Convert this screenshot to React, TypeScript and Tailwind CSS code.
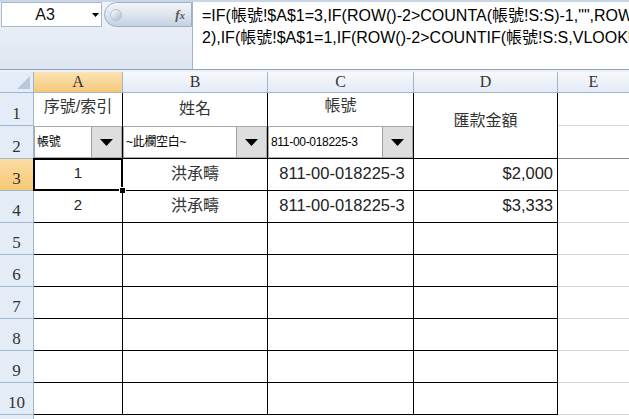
import React from "react";

const CJK = "font-['Liberation_Sans','Noto_Sans_CJK_TC',sans-serif]";
const SERIF = "font-['Liberation_Serif','Noto_Sans_CJK_TC',serif]";

function Tri({ w = 13, h = 7 }: { w?: number; h?: number }) {
  return (
    <svg width={w} height={h} viewBox={`0 0 ${w} ${h}`}>
      <polygon points={`0,0 ${w},0 ${w / 2},${h}`} fill="#000" />
    </svg>
  );
}

function Dropdown({ text }: { text: string }) {
  return (
    <div className="flex h-full border border-[#a8a8a8] bg-white">
      <div className={`flex-1 flex items-center pl-[2px] text-[12px] text-black whitespace-nowrap overflow-hidden ${CJK} tracking-[-0.3px]`}>
        {text}
      </div>
      <div className="w-[30px] bg-[#dedede] border-l border-[#a0a0a0] flex items-center justify-center">
        <Tri />
      </div>
    </div>
  );
}

const rowH = [33, 33, 32, 32, 32, 32, 32, 32, 32, 32];

export default function App() {
  const rh = (n: number, orange = false) => (
    <div
      key={`rh${n}`}
      className={`border-r border-b border-[#9eb6ce] flex items-end justify-center pb-[1px] text-[17px] leading-[20px] text-[#333] ${SERIF} ${
        orange ? "bg-gradient-to-b from-[#fbdca4] to-[#f7c872]" : "bg-[#e4ecf7]"
      }`}
    >
      {n}
    </div>
  );
  const E = (k: string, dark = false) => (
    <div key={k} className={`border-b ${dark ? "border-[#8c8c8c]" : "border-[#d0d7e5]"}`} />
  );
  const cell = "border-r border-b border-black flex items-center";

  const rows: React.ReactNode[] = [];
  // row 1
  rows.push(rh(1));
  rows.push(
    <div key="a1" className={`border-r border-black flex items-center justify-center pb-[6px] text-[16px] text-[#333] ${CJK}`}>序號/索引</div>
  );
  rows.push(
    <div key="b1" className={`border-r border-black flex items-center justify-center pb-[2px] text-[16px] text-[#333] ${CJK}`}>姓名</div>
  );
  rows.push(
    <div key="c1" className={`border-r border-black flex items-start justify-center pt-[1px] text-[16px] text-[#333] ${CJK}`}>帳號</div>
  );
  rows.push(
    <div key="d1" className={`row-span-2 border-r border-b border-black flex items-center justify-center pb-[10px] text-[16px] text-[#333] ${CJK}`}>匯款金額</div>
  );
  rows.push(E("e1"));
  // row 2
  rows.push(rh(2));
  rows.push(<div key="a2" className="border-r border-b border-black"><Dropdown text="帳號" /></div>);
  rows.push(<div key="b2" className="border-r border-b border-black"><Dropdown text="~此欄空白~" /></div>);
  rows.push(<div key="c2" className="border-r border-b border-black"><Dropdown text="811-00-018225-3" /></div>);
  rows.push(E("e2", true));
  // rows 3,4
  const data = [
    { n: 3, idx: "1", amt: "$2,000" },
    { n: 4, idx: "2", amt: "$3,333" },
  ];
  data.forEach((d) => {
    rows.push(rh(d.n, d.n === 3));
    rows.push(
      <div key={`a${d.n}`} className={`${cell} justify-center relative text-[15px] text-[#222] ${CJK}`}>
        <span className="-mt-[2px]">{d.idx}</span>
        {d.n === 3 && (
          <>
            <div className="absolute left-[-1px] top-[-1px] right-[-1px] bottom-[-1px] border-2 border-black" />
            <div className="absolute right-[-4px] bottom-[-4px] w-[7px] h-[7px] bg-black border border-white" />
          </>
        )}
      </div>
    );
    rows.push(
      <div key={`b${d.n}`} className={`${cell} justify-center text-[16px] text-[#333] ${CJK}`}>
        <span className="-mt-[2px]">洪承疇</span>
      </div>
    );
    rows.push(
      <div key={`c${d.n}`} className={`${cell} justify-center text-[16.5px] text-[#222] ${CJK}`}>
        <span className="-mt-[2px] pl-[3px]">811-00-018225-3</span>
      </div>
    );
    rows.push(
      <div key={`d${d.n}`} className={`${cell} justify-end pr-[4px] text-[16.5px] text-[#222] ${CJK}`}>
        <span className="-mt-[2px]">{d.amt}</span>
      </div>
    );
    rows.push(E(`e${d.n}`));
  });
  for (let n = 5; n <= 10; n++) {
    rows.push(rh(n));
    rows.push(<div key={`a${n}`} className={cell} />);
    rows.push(<div key={`b${n}`} className={cell} />);
    rows.push(<div key={`c${n}`} className={cell} />);
    rows.push(<div key={`d${n}`} className={cell} />);
    rows.push(E(`e${n}`));
  }
  // row 11 partial
  rows.push(<div key="rh11" className="bg-[#e4ecf7] border-r border-[#9eb6ce]" />);
  rows.push(<div key="a11" className="col-span-5" />);

  const colHdr = (l: string, orange = false, last = false) => (
    <div
      key={`h${l}`}
      className={`${last ? "" : "border-r"} border-b border-[#9eb6ce] flex items-center justify-center text-[16px] text-[#333] ${SERIF} ${
        orange ? "bg-gradient-to-b from-[#fbe3b4] to-[#f5c877]" : "bg-gradient-to-b from-[#f7f9fc] to-[#e3eaf4]"
      }`}
    >
      {l}
    </div>
  );

  return (
    <div className="w-[629px] h-[419px] overflow-hidden bg-white font-['Liberation_Sans',sans-serif]">
      {/* formula bar */}
      <div className="h-[70px] flex bg-gradient-to-b from-[#c9d6e6] to-[#c9d6e6] pt-[2px] border-b border-[#8fa4bf]">
        <div className="w-[192px] flex flex-col bg-gradient-to-b from-[#f1f4f9] to-[#dde5f0]">
          <div className="h-[25px] flex items-stretch">
            <div className="w-[101px] ml-[1px] bg-white border border-[#a9b9cc] relative flex items-center">
              <span className="w-[86px] text-center text-[16px] text-[#111]">A3</span>
              <div className="absolute left-[90px] top-[10px]">
                <Tri w={7} h={4} />
              </div>
            </div>
            <div className="flex-1 ml-[2px] rounded-l-full bg-gradient-to-b from-[#f3f6fa] via-[#dde5ef] to-[#c4d1e2] border border-[#9db0c6] flex items-center relative">
              <div className="w-[12px] h-[12px] ml-[5px] rounded-full bg-gradient-to-br from-white to-[#aebccd] border border-[#b4c2d3]" />
              <span className="ml-auto mr-[6px] text-[13px] italic font-bold text-[#555] font-['Liberation_Serif',serif]">
                f<span className="text-[11px]">x</span>
              </span>
            </div>
          </div>
        </div>
        <div className={`flex-1 bg-white border-l border-[#a3b2c5] pl-[9px] pt-[3px] text-[16px] leading-[22px] text-black whitespace-nowrap overflow-hidden ${CJK}`}>
          <div>=IF(帳號!$A$1=3,IF(ROW()-2&gt;COUNTA(帳號!S:S)-1,"",ROW()-</div>
          <div>2),IF(帳號!$A$1=1,IF(ROW()-2&gt;COUNTIF(帳號!S:S,VLOOKUP(</div>
        </div>
      </div>
      <div className="h-[2px] bg-[#eef2f8]" />
      {/* grid */}
      <div className="grid grid-cols-[34px_89px_145px_146px_144px_1fr] grid-rows-[21px_33px_33px_32px_32px_32px_32px_32px_32px_32px_32px_10px]">
        <div className="bg-[#e4ecf7] border-r border-b border-[#9eb6ce] relative">
          <svg className="absolute right-[3px] bottom-[3px]" width="13" height="13" viewBox="0 0 13 13">
            <polygon points="13,0 13,13 0,13" fill="#b7c8dc" />
          </svg>
        </div>
        {colHdr("A", true)}
        {colHdr("B")}
        {colHdr("C")}
        {colHdr("D")}
        {colHdr("E", false, true)}
        {rows}
      </div>
    </div>
  );
}
